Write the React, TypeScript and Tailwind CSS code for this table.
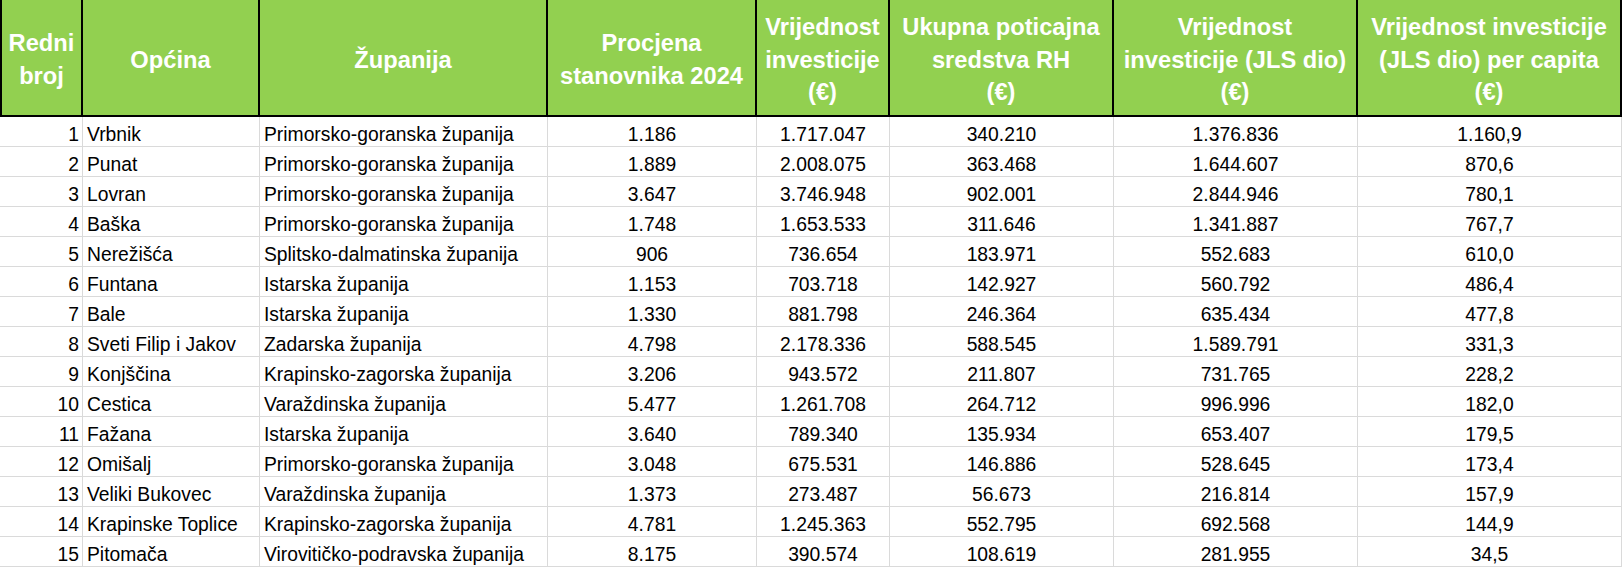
import React from 'react'

// Spreadsheet-style ranking table of municipalities
const rows: string[][] = [
  ['1', 'Vrbnik', 'Primorsko-goranska županija', '1.186', '1.717.047', '340.210', '1.376.836', '1.160,9'],
  ['2', 'Punat', 'Primorsko-goranska županija', '1.889', '2.008.075', '363.468', '1.644.607', '870,6'],
  ['3', 'Lovran', 'Primorsko-goranska županija', '3.647', '3.746.948', '902.001', '2.844.946', '780,1'],
  ['4', 'Baška', 'Primorsko-goranska županija', '1.748', '1.653.533', '311.646', '1.341.887', '767,7'],
  ['5', 'Nerežišća', 'Splitsko-dalmatinska županija', '906', '736.654', '183.971', '552.683', '610,0'],
  ['6', 'Funtana', 'Istarska županija', '1.153', '703.718', '142.927', '560.792', '486,4'],
  ['7', 'Bale', 'Istarska županija', '1.330', '881.798', '246.364', '635.434', '477,8'],
  ['8', 'Sveti Filip i Jakov', 'Zadarska županija', '4.798', '2.178.336', '588.545', '1.589.791', '331,3'],
  ['9', 'Konjščina', 'Krapinsko-zagorska županija', '3.206', '943.572', '211.807', '731.765', '228,2'],
  ['10', 'Cestica', 'Varaždinska županija', '5.477', '1.261.708', '264.712', '996.996', '182,0'],
  ['11', 'Fažana', 'Istarska županija', '3.640', '789.340', '135.934', '653.407', '179,5'],
  ['12', 'Omišalj', 'Primorsko-goranska županija', '3.048', '675.531', '146.886', '528.645', '173,4'],
  ['13', 'Veliki Bukovec', 'Varaždinska županija', '1.373', '273.487', '56.673', '216.814', '157,9'],
  ['14', 'Krapinske Toplice', 'Krapinsko-zagorska županija', '4.781', '1.245.363', '552.795', '692.568', '144,9'],
  ['15', 'Pitomača', 'Virovitičko-podravska županija', '8.175', '390.574', '108.619', '281.955', '34,5'],
]

const headers: string[][] = [
  ['Redni', 'broj'],
  ['Općina'],
  ['Županija'],
  ['Procjena', 'stanovnika 2024'],
  ['Vrijednost', 'investicije', '(€)'],
  ['Ukupna poticajna', 'sredstva RH', '(€)'],
  ['Vrijednost', 'investicije (JLS dio)', '(€)'],
  ['Vrijednost investicije', '(JLS dio) per capita', '(€)'],
]

const cols = 'grid grid-cols-[83px_177px_288px_209px_133px_224px_244px_264px]'

const App: React.FC = () => {
  return (
    <div className="w-[1623px] h-[567px] overflow-hidden bg-white font-['Liberation_Sans',Arial,sans-serif]">
      {/* Header */}
      <div className={cols}>
        {headers.map((lines, i) => (
          <div
            key={i}
            className={`h-[117px] bg-[#92d050] border-r-2 border-b-2 border-black flex items-center justify-center pt-[5px] text-white font-bold text-[23.7px] leading-[32.7px] text-center whitespace-nowrap ${i === 0 ? 'border-l-2' : ''}`}
          >
            <div>
              {lines.map((l, j) => (
                <div key={j}>{l}</div>
              ))}
            </div>
          </div>
        ))}
      </div>

      {/* Body */}
      {rows.map((r) => (
        <div key={r[0]} className={`${cols} text-black text-[19.3px] leading-[18px]`}>
          {r.map((v, i) => (
            <div
              key={i}
              className={`h-[30px] border-r border-b border-[#dadada] flex items-end pb-[2px] whitespace-nowrap ${
                i === 0 ? 'justify-end pr-[3px]' : i < 3 ? 'justify-start pl-[4px]' : 'justify-center'
              }`}
            >
              {v}
            </div>
          ))}
        </div>
      ))}
    </div>
  )
}

export default App
